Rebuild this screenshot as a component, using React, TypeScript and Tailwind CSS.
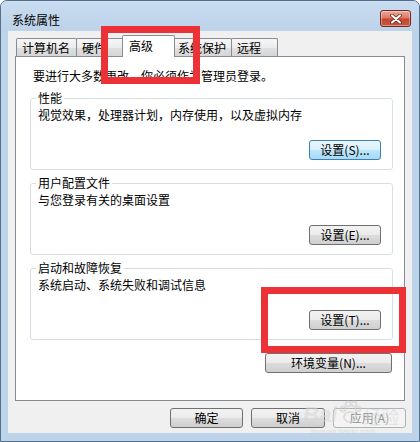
import React from "react";

type BtnProps = { children: React.ReactNode; w: string; variant?: "normal" | "hot" | "disabled"; extra?: string };

function Btn({ children, w, variant = "normal", extra = "" }: BtnProps) {
  const base = "h-[20px] rounded-[3px] border flex items-center justify-center text-[12px] leading-[16px] shrink-0 " + w + " " + extra;
  const v =
    variant === "hot"
      ? "border-[#3c7fb1] bg-[linear-gradient(#eaf6fd_0%,#d9f0fc_50%,#bee6fd_50%,#a7d9f5_100%)] text-black"
      : variant === "disabled"
      ? "border-[#adb2b5] bg-[#f4f4f4] text-[#8d8d8d]"
      : "border-[#707070] bg-[linear-gradient(#f2f2f2_0%,#ebebeb_50%,#dddddd_50%,#cfcfcf_100%)] text-black";
  return <div className={base + " " + v}>{children}</div>;
}

function Group({ title, desc, btn, hot }: { title: string; desc: string; btn: string; hot?: boolean }) {
  return (
    <fieldset className="w-full border border-[#d5dfe5] rounded-[3px] p-0 m-0 flex flex-col min-w-0">
      <legend className="ml-[5px] px-[2px] leading-[16px] text-[12px] text-black">{title}</legend>
      <div className="pl-[7px] mt-[1px] leading-[16px] text-[12px] text-black">{desc}</div>
      <div className="flex justify-end mt-[17px] mb-[9px] pr-[11px]">
        <Btn w="w-[72px]" variant={hot ? "hot" : "normal"}>{btn}</Btn>
      </div>
    </fieldset>
  );
}

function Tab({ label, w, selected, first }: { label: string; w: string; selected?: boolean; first?: boolean }) {
  if (selected) {
    return (
      <div
        className={
          "relative z-10 -ml-[3px] -mr-[2px] h-[22px] border-t border-l border-r border-[#898c95] bg-white rounded-t-[2px] pl-[6px] pt-[2px] text-[12px] leading-[16px] text-black shrink-0 " +
          w
        }
      >
        {label}
      </div>
    );
  }
  return (
    <div
      className={
        (first ? "" : "-ml-[1px] ") +
        "relative mb-[1px] h-[18px] border-t border-l border-r border-[#898c95] rounded-t-[2px] bg-[linear-gradient(#f6f6f6_0%,#ececec_50%,#e0e0e0_50%,#d6d6d6_100%)] pl-[5px] pt-[1px] text-[12px] leading-[16px] text-black shrink-0 " +
        w
      }
    >
      {label}
    </div>
  );
}

export default function App() {
  return (
    <div className="w-[420px] h-[442px] relative overflow-hidden bg-[#bdd3ea] border border-[#53708f] rounded-t-[7px] flex flex-col font-['Noto_Sans_CJK_SC',sans-serif]">
      {/* title bar */}
      <div className="h-[30px] shrink-0 flex items-start justify-between bg-[linear-gradient(#c9dcf0,#bdd3ea)]">
        <span className="mt-[11px] ml-[11px] text-[12px] leading-[16px] text-black">系统属性</span>
        <div className="mt-[9px] mr-[8px] w-[31px] h-[17px] rounded-[3px] border border-[#6b2a22] bg-[linear-gradient(#ecaa9a_0%,#dd7a66_45%,#c7432c_55%,#c95a40_100%)] flex items-center justify-center shadow-[inset_0_0_0_1px_rgba(255,255,255,0.35)]">
          <svg width="12" height="10" viewBox="0 0 12 10">
            <path d="M2 1.5 L10 8.5 M10 1.5 L2 8.5" stroke="#5a1c14" strokeWidth="3.6" strokeLinecap="round" />
            <path d="M2 1.5 L10 8.5 M10 1.5 L2 8.5" stroke="#ffffff" strokeWidth="2.2" strokeLinecap="round" />
          </svg>
        </div>
      </div>

      {/* client area */}
      <div className="mx-[7px] h-[402px] shrink-0 bg-[#f0f0f0] flex flex-col">
        <div className="relative z-10 flex items-end pl-[8px] pt-[4px] h-[26px]">
          <Tab label="计算机名" w="w-[61px]" first />
          <Tab label="硬件" w="w-[49px]" />
          <Tab label="高级" w="w-[53px]" selected />
          <Tab label="系统保护" w="w-[60px]" />
          <Tab label="远程" w="w-[47px]" />
        </div>
        <div className="-mt-[1px] ml-[7px] w-[390px] h-[345px] border border-[#898c95] bg-white flex flex-col pl-[14px] pr-[11px] pt-[11px]">
          <div className="pl-[3px] text-[12px] leading-[16px] text-black">要进行大多数更改，你必须作为管理员登录。</div>
          <div className="mt-[6px] flex flex-col gap-[5px]">
            <Group title="性能" desc="视觉效果，处理器计划，内存使用，以及虚拟内存" btn="设置(S)..." hot />
            <Group title="用户配置文件" desc="与您登录有关的桌面设置" btn="设置(E)..." />
            <Group title="启动和故障恢复" desc="系统启动、系统失败和调试信息" btn="设置(T)..." />
          </div>
          <div className="flex justify-end mt-[13px] pr-[1px]">
            <Btn w="w-[127px]">环境变量(N)...</Btn>
          </div>
        </div>
        <div className="flex justify-end gap-[8px] mt-[7px] pr-[6px]">
          <Btn w="w-[73px]">确定</Btn>
          <Btn w="w-[74px]">取消</Btn>
          <Btn w="w-[73px]" variant="disabled">应用(A)</Btn>
        </div>
      </div>

      {/* Baidu watermark */}
      <div className="absolute left-[302px] top-[380px] flex flex-col items-start pointer-events-none opacity-60">
        <div className="flex items-end">
          <span className="text-[22px] leading-[24px] font-bold text-[#d8d8d8] italic mt-[22px] font-['Liberation_Sans',sans-serif]">Bai</span>
          <svg width="26" height="26" viewBox="0 0 26 26" className="mb-[2px]">
            <ellipse cx="13" cy="18" rx="6" ry="5" fill="none" stroke="#d0d0d0" strokeWidth="2" />
            <circle cx="6" cy="10" r="2.5" fill="none" stroke="#d0d0d0" strokeWidth="2" />
            <circle cx="11" cy="5" r="2.5" fill="none" stroke="#d0d0d0" strokeWidth="2" />
            <circle cx="17" cy="5" r="2.5" fill="none" stroke="#d0d0d0" strokeWidth="2" />
            <circle cx="21" cy="10" r="2.5" fill="none" stroke="#d0d0d0" strokeWidth="2" />
          </svg>
          <span className="text-[18px] leading-[22px] text-[#d8d8d8]">经验</span>
        </div>
        <span className="text-[8px] leading-[9px] text-[#d0d0d0] ml-[8px] font-['Liberation_Sans',sans-serif]">jingyan.baidu.com</span>
      </div>

      {/* red annotation boxes */}
      <div className="absolute left-[100px] top-[25px] w-[99px] h-[58px] border-[7px] border-[#ec3237] pointer-events-none z-20" />
      <div className="absolute left-[260px] top-[286px] w-[145px] h-[66px] border-[7px] border-[#ec3237] pointer-events-none z-20" />
    </div>
  );
}
